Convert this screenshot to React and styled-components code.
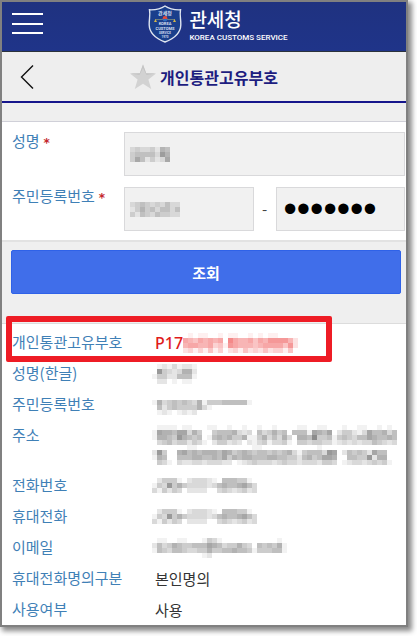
import React from "react";
import styled, { createGlobalStyle } from "styled-components";

const GlobalStyle = createGlobalStyle`
  * {
    box-sizing: border-box;
  }
  body {
    margin: 0;
    background: #ffffff;
    font-family: "Noto Sans CJK KR", sans-serif;
    font-size: 15px;
    line-height: 20px;
  }
`;

const Page = styled.div`
  padding: 0 9px 9px 0;
`;
const Screen = styled.div`
  border: 2px solid #808080;
  background: #ffffff;
  box-shadow: 3px 3px 5px 1px #8a8a8a;
`;

const TopBar = styled.header`
  display: grid;
  grid-template-columns: 1fr auto 1fr;
  align-items: center;
  height: 50px;
  padding: 0 10px 5px;
  background: linear-gradient(#1f3280, #1f3489);
  border-bottom: 1px solid #2b323c;
`;
const IconButton = styled.button`
  display: flex;
  justify-self: start;
  padding: 0;
  border: none;
  background: none;
  cursor: pointer;
`;
const Brand = styled.a`
  display: flex;
  align-items: center;
  gap: 7px;
  padding-left: 28px;
  color: #ffffff;
  text-decoration: none;
`;
const BrandText = styled.span`
  display: flex;
  flex-direction: column;
`;
const BrandName = styled.span`
  font-size: 19px;
  font-weight: 500;
  line-height: 28px;
`;
const BrandSub = styled.span`
  font-family: Roboto, sans-serif;
  font-size: 8px;
  font-weight: 500;
  line-height: 10px;
  white-space: nowrap;
`;

const TitleBar = styled.div`
  display: grid;
  grid-template-columns: 1fr auto 1fr;
  align-items: center;
  height: 51px;
  padding: 0 18px;
  background: #eeeeee;
  border-bottom: 2px solid #16168c;
`;
const Title = styled.h1`
  display: flex;
  align-items: center;
  gap: 4px;
  margin: 0;
  color: #1d1d80;
  font-size: 16px;
  font-weight: 700;
  line-height: 24px;
`;
const Strip = styled.div`
  height: 19px;
  background: #efefef;
  border-bottom: 1px solid #d0d0d8;
`;

const Fields = styled.div`
  display: grid;
  row-gap: 11px;
  padding: 10px 1px 9px 10px;
  border-bottom: 2px solid #e2e2e2;
`;
const Field = styled.div`
  display: grid;
  grid-template-columns: 112px 1fr;
`;
const Label = styled.label`
  color: #3f80b6;
  line-height: 18px;
  white-space: nowrap;
`;
const Required = styled.span`
  margin-left: 4px;
  color: #c4262b;
  font-family: "DejaVu Sans", sans-serif;
  font-size: 12px;
  font-weight: 700;
`;
const Inputs = styled.div`
  display: flex;
  align-items: center;
`;
const InputBox = styled.div`
  position: relative;
  flex: 1;
  min-width: 0;
`;
const Input = styled.input`
  display: block;
  width: 100%;
  height: 44px;
  padding: 0 7px;
  border: 1px solid #d9d9db;
  border-radius: 0;
  background: #f1f1f1;
  color: #000000;
  font-family: "Liberation Sans", sans-serif;
  font-size: ${(props) => (props.type === "password" ? "38px" : "15px")};
  outline: none;
`;
const InputMask = styled.div`
  position: absolute;
  top: 15px;
  left: 6px;
`;
const Dash = styled.span`
  width: 22px;
  color: #444444;
  text-align: center;
`;

const Actions = styled.div`
  padding: 8px 5px 29px 9px;
  background: #efefef;
  border-bottom: 1px solid #dcdcdc;
`;
const SearchButton = styled.button`
  width: 100%;
  height: 44px;
  border: 1px solid #2f62e8;
  border-radius: 2px;
  background: #406eea;
  color: #ffffff;
  font-family: inherit;
  font-size: 15px;
  font-weight: 700;
  cursor: pointer;
`;

const Details = styled.dl`
  margin: 0;
  padding-top: 3px;
`;
const Row = styled.div`
  position: relative;
  display: grid;
  grid-template-columns: 140px 1fr;
  height: ${(props) => (props.$tall ? "50px" : "31px")};
  padding-left: 10px;
`;
const HighlightRow = styled(Row)`
  &::after {
    content: "";
    position: absolute;
    top: -11px;
    right: 74px;
    bottom: -4px;
    left: 4px;
    border: 6px solid #ee1c25;
    border-radius: 2px;
  }
`;
const Term = styled.dt`
  color: #3f80b6;
  line-height: 30px;
  white-space: nowrap;
`;
const Value = styled.dd`
  display: flex;
  align-items: center;
  margin: 0;
  color: #333333;
  line-height: 30px;
`;
const ValueText = styled.span`
  padding-left: 3px;
`;
const Code = styled(ValueText)`
  color: #e01b1b;
  font-family: "Noto Sans", sans-serif;
  font-size: 16px;
  font-weight: 500;
`;
const MosaicSvg = styled.svg`
  display: block;
  flex: none;
`;

const CELL = 5;

// each digit is the darkness of one cell
const Mosaic = ({ rows, color = "#000000", step = 0.05 }) => (
  <MosaicSvg
    width={rows[0].length * CELL}
    height={rows.length * CELL}
    shapeRendering="crispEdges"
    aria-hidden="true"
  >
    {rows.map((row, y) =>
      [...row].map((level, x) => (
        <rect
          key={`${x}-${y}`}
          x={x * CELL}
          y={y * CELL}
          width={CELL}
          height={CELL}
          fill={color}
          opacity={level * step}
        />
      ))
    )}
  </MosaicSvg>
);

const NAME = ["23223154", "34444275", "36413126"];
const BIRTH = ["2343232422", "1353424424", "3143243322"];
const CODE = [
  "01011001011001010110000",
  "65465656086556465777752",
  "56655634176555456666472",
  "23131413023142324233140",
];
const NAME_KR = ["012131221", "084323662", "144225551", "022010110"];
const RESIDENT = [
  "00000000000000000000",
  "16345454361444555551",
  "05245444463100000000",
  "01210121200000000000",
];
const ADDRESS = [
  "0111101100011001001001001000011001100010011001010",
  "1766577364004555632305346450555176570244213755635",
  "1665486545015656446114635363066594451454355765565",
  "0345344243102442320213413341044344331232323354323",
  "0000000110000000000011000000000001000000000000000",
  "2840067565666576456545545456314555387025454275500",
  "1650055566556574656655566554425645776005544826600",
  "0431032233233322012343332343323332443012332343410",
];
const PHONE = [
  "024441023332105554410",
  "143846433332356556753",
  "314243022220034323423",
];
const EMAIL = [
  "011001100014310000000000010",
  "253465445557653446430545461",
  "154355433446445565541444551",
  "000000000012000000000000000",
];

const details = [
  { term: "성명(한글)", mosaic: NAME_KR },
  { term: "주민등록번호", mosaic: RESIDENT },
  { term: "주소", mosaic: ADDRESS, tall: true },
  { term: "전화번호", mosaic: PHONE },
  { term: "휴대전화", mosaic: PHONE },
  { term: "이메일", mosaic: EMAIL },
  { term: "휴대전화명의구분", text: "본인명의" },
  { term: "사용여부", text: "사용" },
];

const MenuIcon = () => (
  <svg width="31" height="24" viewBox="0 0 31 24" fill="#ffffff">
    <rect y="1" width="31" height="2" />
    <rect y="11" width="31" height="2" />
    <rect y="20" width="31" height="2" />
  </svg>
);

const BackIcon = () => (
  <svg width="14" height="26" viewBox="0 0 14 26" fill="none">
    <path d="M13 1.5 1.5 13 13 24.5" stroke="#111111" strokeWidth="1.4" />
  </svg>
);

const StarIcon = () => (
  <svg width="26" height="26" viewBox="0 0 26 26">
    <path
      d="M13 0.5 16.2 9.3 26 9.6 18.4 15.6 21.2 25 13 19.8 4.8 25 7.6 15.6 0 9.6 9.8 9.3Z"
      fill="#d2d2d2"
    />
    <path
      d="M13 0.5 16.2 9.3 26 9.6 16.5 11 13 4 9.5 11 0 9.6 9.8 9.3Z"
      fill="#c4c4c4"
    />
  </svg>
);

const Emblem = () => (
  <svg width="34" height="38" viewBox="0 0 34 38">
    <path
      d="M17 1C13 3.8 7 5 1.5 4.8C2.5 10 1 14 1.2 20C1.5 28.5 9 34 17 37C25 34 32.5 28.5 32.8 20C33 14 31.5 10 32.5 4.8C27 5 21 3.8 17 1Z"
      fill="#1a3f8c"
      stroke="#dfe5f0"
      strokeWidth="1.4"
    />
    <path d="M7 14.5H27" stroke="#7f8a78" strokeWidth="0.8" />
    <path d="M6 17 7.5 14 9 17ZM25 17 26.5 14 28 17Z" fill="#d3b64a" />
    <circle cx="17" cy="13.5" r="2.4" fill="#df4a3c" />
    <path d="M14.6 14a2.4 2.4 0 0 0 4.8 0Z" fill="#2c6fc4" />
    <g
      fill="#d5deef"
      textAnchor="middle"
      fontFamily="Roboto, sans-serif"
      fontWeight="700"
    >
      <text x="17" y="10" fontSize="5" fontFamily="Noto Sans CJK KR, sans-serif">
        관세청
      </text>
      <text x="17" y="20" fontSize="4">
        KOREA
      </text>
      <text x="17" y="25" fontSize="4">
        CUSTOMS
      </text>
      <text x="17" y="29" fontSize="3">
        SERVICE
      </text>
      <text x="17" y="33" fontSize="3">
        1970
      </text>
    </g>
  </svg>
);

const App = () => {
  return (
    <>
      <GlobalStyle />
      <Page>
        <Screen>
          <TopBar>
            <IconButton type="button" aria-label="메뉴">
              <MenuIcon />
            </IconButton>
            <Brand href="#">
              <Emblem />
              <BrandText>
                <BrandName>관세청</BrandName>
                <BrandSub>KOREA CUSTOMS SERVICE</BrandSub>
              </BrandText>
            </Brand>
          </TopBar>
          <TitleBar>
            <IconButton type="button" aria-label="뒤로">
              <BackIcon />
            </IconButton>
            <Title>
              <StarIcon />
              개인통관고유부호
            </Title>
          </TitleBar>
          <Strip />

          <form onSubmit={(e) => e.preventDefault()}>
            <Fields>
              <Field>
                <Label htmlFor="name">
                  성명<Required>*</Required>
                </Label>
                <InputBox>
                  <Input id="name" type="text" />
                  <InputMask>
                    <Mosaic rows={NAME} />
                  </InputMask>
                </InputBox>
              </Field>
              <Field>
                <Label htmlFor="birth">
                  주민등록번호<Required>*</Required>
                </Label>
                <Inputs>
                  <InputBox>
                    <Input id="birth" type="text" />
                    <InputMask>
                      <Mosaic rows={BIRTH} />
                    </InputMask>
                  </InputBox>
                  <Dash>-</Dash>
                  <InputBox>
                    <Input
                      type="password"
                      aria-label="주민등록번호 뒷자리"
                      defaultValue="0000000"
                    />
                  </InputBox>
                </Inputs>
              </Field>
            </Fields>
            <Actions>
              <SearchButton type="submit">조회</SearchButton>
            </Actions>
          </form>

          <Details>
            <HighlightRow>
              <Term>개인통관고유부호</Term>
              <Value>
                <Code>P17</Code>
                <Mosaic rows={CODE} color="#ea1c1c" step={0.065} />
              </Value>
            </HighlightRow>
            {details.map(({ term, mosaic, text, tall }) => (
              <Row key={term} $tall={tall}>
                <Term>{term}</Term>
                <Value>
                  {mosaic ? <Mosaic rows={mosaic} /> : <ValueText>{text}</ValueText>}
                </Value>
              </Row>
            ))}
          </Details>
        </Screen>
      </Page>
    </>
  );
};

export default App;
